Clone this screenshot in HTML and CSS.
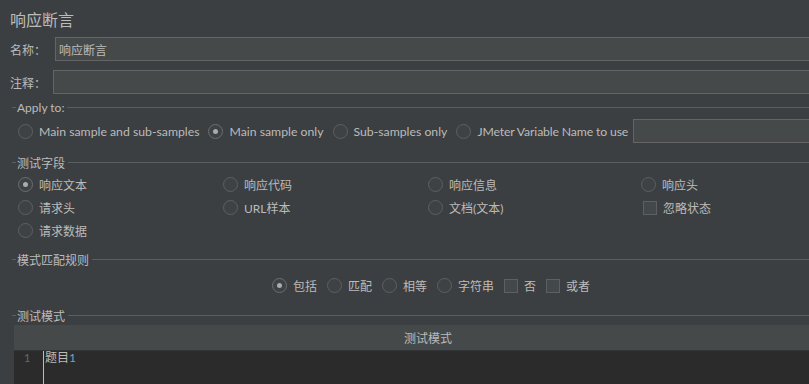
FILE: index.html
```html
<!DOCTYPE html>
<html lang="zh-CN">
<head>
  <meta charset="UTF-8">
  <title>响应断言</title>
  <link rel="stylesheet" href="styles.css">
</head>
<body>
  <div class="title">响应断言</div>

  <div class="form-row">
    <label class="form-label">名称：</label>
    <input type="text" class="text-input" value="响应断言">
  </div>
  <div class="form-row">
    <label class="form-label narrow">注释：</label>
    <input type="text" class="text-input">
  </div>

  <div class="legend legend-apply"><span>Apply to:</span></div>
  <div class="apply-row">
    <span class="option"><span class="radio"></span>Main sample and sub-samples</span>
    <span class="option"><span class="radio checked"></span>Main sample only</span>
    <span class="option"><span class="radio"></span>Sub-samples only</span>
    <span class="option var-label"><span class="radio"></span>JMeter Variable Name to use</span>
    <input type="text" class="text-input var-input">
  </div>

  <div class="legend legend-field"><span>测试字段</span></div>
  <div class="field-grid">
    <span class="option"><span class="radio checked"></span>响应文本</span>
    <span class="option"><span class="radio"></span>响应代码</span>
    <span class="option"><span class="radio"></span>响应信息</span>
    <span class="option"><span class="radio"></span>响应头</span>
    <span class="option"><span class="radio"></span>请求头</span>
    <span class="option"><span class="radio"></span>URL样本</span>
    <span class="option"><span class="radio"></span>文档(文本)</span>
    <span class="option shift"><span class="checkbox"></span>忽略状态</span>
    <span class="option"><span class="radio"></span>请求数据</span>
  </div>

  <div class="legend legend-match"><span>模式匹配规则</span></div>
  <div class="match-row">
    <span class="option"><span class="radio checked"></span>包括</span>
    <span class="option"><span class="radio"></span>匹配</span>
    <span class="option"><span class="radio"></span>相等</span>
    <span class="option"><span class="radio"></span>字符串</span>
    <span class="option"><span class="checkbox"></span>否</span>
    <span class="option"><span class="checkbox"></span>或者</span>
  </div>

  <div class="legend legend-test"><span>测试模式</span></div>
  <div class="pattern-table">
    <div class="table-header">测试模式</div>
    <div class="editor">
      <div class="gutter">1</div>
      <div class="code">题目<span class="num">1</span></div>
    </div>
  </div>
</body>
</html>
```

FILE: styles.css
```css
body {
  margin: 0;
  background-color: #3c3f41;
  color: #bbbbbb;
  font-family: Lato, "Noto Sans CJK SC", sans-serif;
  font-size: 12px;
  height: 384px;
  overflow: hidden;
}
.title {
  height: 37px;
  display: flex;
  align-items: center;
  padding-left: 10px;
  font-size: 16px;
}
.form-row {
  display: flex;
  align-items: center;
  height: 24px;
  margin-bottom: 9px;
}
.form-label {
  width: 55px;
  flex-shrink: 0;
  white-space: nowrap;
  padding-left: 10px;
  box-sizing: border-box;
  font-size: 12px;
}
.form-label.narrow {
  width: 53px;
}
.text-input {
  flex: 1;
  min-width: 0;
  height: 24px;
  box-sizing: border-box;
  background-color: #45494a;
  border: 1px solid #646464;
  border-right: none;
  color: #bbbbbb;
  font-family: Lato, "Noto Sans CJK SC", sans-serif;
  font-size: 12px;
  padding: 0 3px;
  outline: none;
}
.legend {
  display: flex;
  align-items: center;
  height: 16px;
  padding-left: 12px;
}
.legend::before {
  content: "";
  width: 4px;
  height: 1px;
  background-color: #5b5e60;
  margin-right: 1px;
}
.legend::after {
  content: "";
  flex: 1;
  height: 1px;
  background-color: #5b5e60;
  margin-left: 3px;
}
.legend-apply {
  margin-top: -4px;
}
.legend-field {
  margin-top: 11px;
}
.legend-match {
  margin-top: 9px;
}
.legend-test {
  margin-top: 10px;
}
.option {
  display: flex;
  align-items: center;
  white-space: nowrap;
}
.radio {
  width: 15px;
  height: 15px;
  box-sizing: border-box;
  border: 1px solid #5d6062;
  border-radius: 50%;
  background-color: #3e4244;
  margin-right: 6px;
  display: flex;
  align-items: center;
  justify-content: center;
  flex-shrink: 0;
}
.radio.checked {
  border-color: #6b6e70;
}
.radio.checked::after {
  content: "";
  width: 5px;
  height: 5px;
  border-radius: 50%;
  background-color: #a9abad;
}
.checkbox {
  width: 14px;
  height: 14px;
  box-sizing: border-box;
  border: 1px solid #5d6062;
  background-color: #43484a;
  margin-right: 6px;
  flex-shrink: 0;
}
.apply-row {
  display: flex;
  align-items: center;
  gap: 9px;
  height: 24px;
  margin-top: 4px;
  padding-left: 18px;
  font-size: 12.25px;
}
.apply-row .var-label {
  letter-spacing: -0.15px;
}
.apply-row .var-input {
  margin-left: -4px;
}
.field-grid {
  display: grid;
  grid-template-columns: 205px 205px 213px 1fr;
  grid-auto-rows: 23px;
  align-items: center;
  margin-top: 3px;
  padding-left: 18px;
}
.field-grid .shift {
  padding-left: 2px;
}
.match-row {
  display: flex;
  align-items: center;
  gap: 10px;
  height: 23px;
  margin-top: 7px;
  padding-left: 272px;
}
.pattern-table {
  margin-top: 2px;
  margin-left: 14px;
}
.table-header {
  height: 25px;
  display: flex;
  align-items: center;
  justify-content: center;
  background-color: #45494a;
  border-bottom: 1px solid #333638;
  padding-left: 33px;
}
.editor {
  display: flex;
  height: 40px;
  background-color: #2b2b2b;
}
.gutter {
  width: 30px;
  box-sizing: border-box;
  padding-left: 10px;
  color: #5f6b6b;
  font-size: 11px;
  line-height: 14px;
  border-right: 1px solid #bbbbbb;
}
.code {
  padding-left: 1px;
  line-height: 14px;
  color: #bbbbbb;
}
.code .num {
  color: #7f9fbf;
}
```
